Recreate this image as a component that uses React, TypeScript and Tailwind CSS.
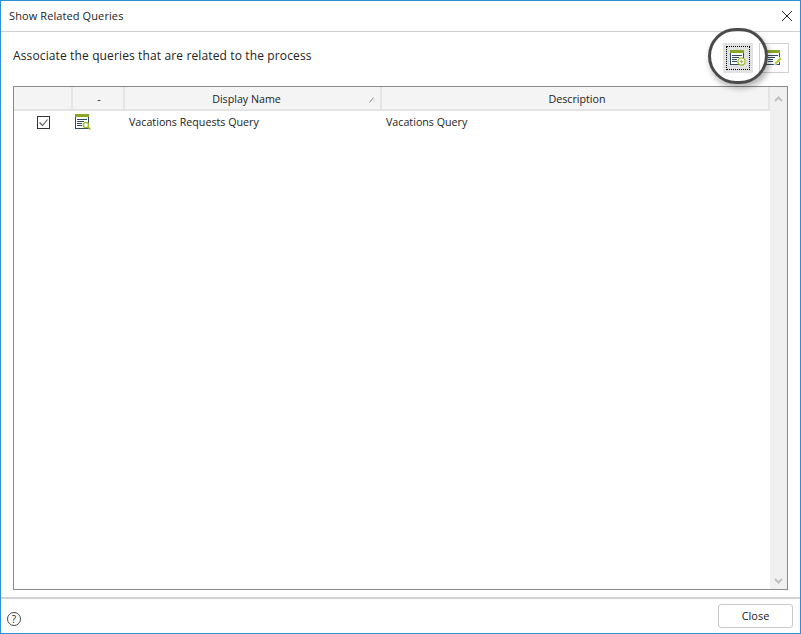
import React from "react";

function QueryIcon({ badge }: { badge: "plus" | "edit" | "search" }) {
  return (
    <svg width="16" height="16" viewBox="0 0 16 16" shapeRendering="crispEdges">
      <rect x="0.5" y="0.5" width="13" height="14" fill="#fff" stroke="#2f4b5e" />
      <rect x="0" y="0" width="14" height="3" fill="#8aa624" />
      <path d="M2 5.5h10M2 7.5h7M2 9.5h5M2 11.5h5" stroke="#2f4b5e" fill="none" />
      {badge === "plus" && (
        <g shapeRendering="auto">
          <circle cx="11.5" cy="11.5" r="3.6" fill="#fff" stroke="#9dbb2c" strokeWidth="1.3" />
          <path d="M9.7 11.5h3.6M11.5 9.7v3.6" stroke="#9dbb2c" strokeWidth="1.2" />
        </g>
      )}
      {badge === "edit" && (
        <g shapeRendering="auto">
          <path d="M8 15l1-3 5-5 2 2-5 5z" fill="#b3cc4a" stroke="#fff" strokeWidth="0.6" />
        </g>
      )}
      {badge === "search" && (
        <g shapeRendering="auto">
          <circle cx="11" cy="11" r="2.6" fill="#fff" stroke="#9dbb2c" strokeWidth="1.4" />
          <path d="M13 13l2.4 2.4" stroke="#9dbb2c" strokeWidth="1.6" />
        </g>
      )}
    </svg>
  );
}

function HeaderCell({ className, children }: { className: string; children?: React.ReactNode }) {
  return (
    <div className={`relative flex h-full items-center justify-center border-r-2 border-b-2 border-[#e4e4e4] bg-[#f4f4f4] pt-[2px] ${className}`}>
      {children}
    </div>
  );
}

export default function App() {
  return (
    <div
      className="relative flex h-[634px] w-[801px] flex-col overflow-hidden border border-[#2b90d9] bg-white text-[10.7px] text-[#222]"
      style={{ fontFamily: '"Open Sans", "Noto Sans", sans-serif' }}
    >
      <div className="flex h-[31px] shrink-0 items-center justify-between border-b border-[#d0d0d0] pl-2 pr-[7px]">
        <span className="text-[11px] tracking-[0.1px]">Show Related Queries</span>
        <svg width="12" height="12" viewBox="0 0 12 12">
          <path d="M1 1l10 10M11 1L1 11" stroke="#222" strokeWidth="1" fill="none" />
        </svg>
      </div>

      <div className="flex h-[54px] shrink-0 items-center justify-between pl-3 pr-[11px]">
        <span className="relative top-[-3px] text-[12px] tracking-[0.13px]">Associate the queries that are related to the process</span>
        <div className="relative top-[-1px] flex gap-[6px]">
          <div className="flex h-[30px] w-[30px] items-center justify-center bg-[#e2e2e2]">
            <div className="flex h-[24px] w-[24px] items-center justify-center border border-dotted border-black">
              <QueryIcon badge="plus" />
            </div>
          </div>
          <div className="flex h-[30px] w-[30px] items-center justify-center border border-[#d0d0d0] bg-white">
            <QueryIcon badge="edit" />
          </div>
        </div>
      </div>

      <div className="ml-3 mr-3 flex h-[504px] shrink-0 border border-[#8a8a8a]">
        <div className="flex min-w-0 flex-1 flex-col">
          <div className="flex h-[24px] shrink-0">
            <HeaderCell className="w-[59px]" />
            <HeaderCell className="w-[52px] pl-[2px]">-</HeaderCell>
            <HeaderCell className="w-[257px] pr-[12px]">
              Display Name
              <svg className="absolute right-[5px] top-[10px]" width="6" height="6" viewBox="0 0 6 6">
                <path d="M0.5 5.5L4.5 0.5" stroke="#888" fill="none" />
                <path d="M4.5 0.5L5.5 5.5" stroke="#ddd" fill="none" />
              </svg>
            </HeaderCell>
            <HeaderCell className="flex-1 pl-[4px]">Description</HeaderCell>
          </div>
          <div className="flex h-[22px] items-center">
            <div className="flex w-[59px] justify-center">
              <div className="flex h-[13px] w-[13px] items-center justify-center border border-[#333] bg-white">
                <svg width="11" height="11" viewBox="0 0 11 11">
                  <path d="M1.5 5.5l3 3 5-6" stroke="#555" strokeWidth="1.1" fill="none" />
                </svg>
              </div>
            </div>
            <div className="flex w-[52px] justify-start pl-[2px]">
              <QueryIcon badge="search" />
            </div>
            <div className="w-[257px] pl-[4px]">Vacations Requests Query</div>
            <div className="pl-[4px]">Vacations Query</div>
          </div>
        </div>
        <div className="flex w-[17px] shrink-0 flex-col items-center justify-between bg-[#f0f0f0]">
          <div className="flex h-[24px] items-center justify-center">
            <svg width="9" height="6" viewBox="0 0 9 6">
              <path d="M1 5l3.5-3.5L8 5" stroke="#c0c0c0" strokeWidth="2" fill="none" />
            </svg>
          </div>
          <div className="flex h-[17px] items-center justify-center">
            <svg width="9" height="6" viewBox="0 0 9 6">
              <path d="M1 1l3.5 3.5L8 1" stroke="#c0c0c0" strokeWidth="2" fill="none" />
            </svg>
          </div>
        </div>
      </div>

      <div className="mt-[7px] h-[2px] shrink-0 bg-[#d2d2d2]" />

      <div className="flex flex-1 items-center justify-between pl-[6px] pr-[7px]">
        <div className="relative top-[3px] flex h-[14px] w-[14px] items-center justify-center rounded-full border border-[#444] text-[10px] leading-none">?</div>
        <div className="flex h-[24px] w-[75px] items-center justify-center rounded-[3px] border border-[#c8c8c8] bg-white text-[11px]">Close</div>
      </div>

      <div className="absolute left-[707px] top-[27px] h-[56px] w-[60px] rounded-full border-[3.5px] border-[#4a4a4a] shadow-[2px_4px_6px_rgba(0,0,0,0.3)]" />
    </div>
  );
}
